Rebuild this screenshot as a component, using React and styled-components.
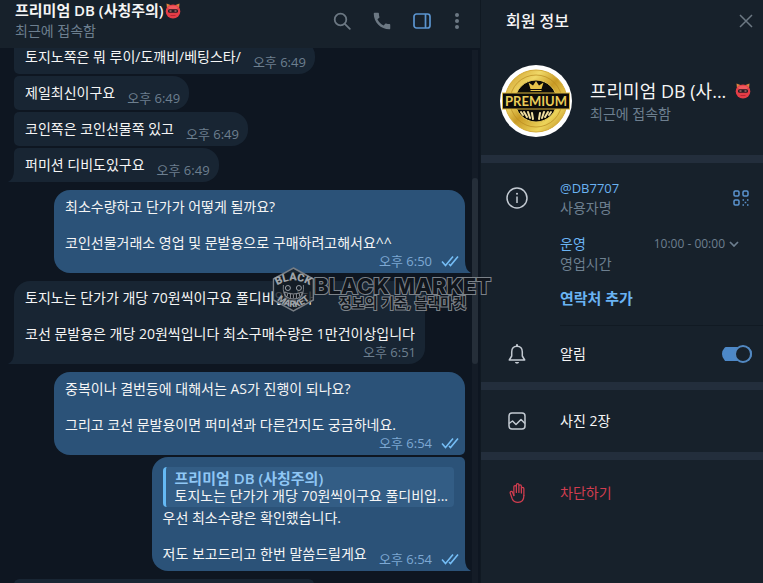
import styled, { createGlobalStyle, css } from 'styled-components';
import { useEffect, useRef, useState } from 'react';
import { MdCall } from 'react-icons/md';
import { IoHandRightOutline } from 'react-icons/io5';

const GlobalStyle = createGlobalStyle`
  *, *::before { box-sizing: border-box; }
  body {
    margin: 0;
    background-color: #0e1621;
    color: #f5f5f5;
    font-family: "Open Sans", "Noto Sans CJK KR", sans-serif;
    font-size: 14px;
    line-height: 18px;
  }
  button {
    border: 0;
    padding: 0;
    background: none;
    color: inherit;
    font: inherit;
    text-align: left;
    cursor: pointer;
  }
  svg { display: block; flex-shrink: 0; }
`;

const Page = styled.div`
  position: relative;
  display: flex;
  height: 100vh;
  overflow: hidden;
`;

const Chat = styled.main`
  flex: 1;
  min-width: 0;
  display: flex;
  flex-direction: column;
`;

const ChatHeader = styled.header`
  height: 48px;
  flex-shrink: 0;
  display: flex;
  justify-content: space-between;
  padding: 0 17px 0 15px;
  background-color: #17212b;
`;

const ChatTitle = styled.h1`
  display: flex;
  align-items: center;
  gap: 1px;
  margin: 0;
  font-size: 15px;
  line-height: 21px;
  font-weight: 600;
  white-space: pre;
`;

const Muted = styled.div`
  color: #6d7f8f;
  line-height: 20px;
`;

const Tools = styled.div`
  display: flex;
  align-items: center;
  height: 42px;
  gap: 20px;
  color: #6c7883;
`;

const ChatBody = styled.div`
  flex: 1;
  min-height: 0;
  display: flex;
  padding-right: 2px;
`;

const List = styled.div`
  flex: 1;
  overflow: hidden;
  display: flex;
  flex-direction: column;
  gap: 8px;
  padding: 0 7px 0 14px;
`;

const Group = styled.div`
  flex-shrink: 0;
  display: flex;
  flex-direction: column;
  align-items: ${p => p.$out ? 'flex-end' : 'flex-start'};
  gap: 2px;
`;

const Track = styled.div`
  width: 6px;
  margin-top: 2px;
  display: flex;
  flex-direction: column;
  background-color: #141c27;
`;

const TrackSpace = styled.div`
  flex: ${p => p.$size};
`;

const Thumb = styled.div`
  flex: 35;
  border-radius: 3px;
  background-color: #252e39;
`;

const outCorners = css`
  border-radius: ${p => p.$first ? '16px 16px' : '16px 5px'} ${p => p.$last ? '0' : '5px'} 16px;
`;

const inCorners = css`
  border-radius: ${p => p.$first ? '16px' : '5px'} 16px 16px ${p => p.$last ? '0' : '5px'};
`;

const Bubble = styled.div`
  position: relative;
  display: flex;
  flex-direction: column;
  width: ${p => p.$wide ? '411px' : 'auto'};
  max-width: ${p => p.$short ? '300px' : '100%'};
  padding: 8px ${p => p.$out ? 6 : 9}px 3px 11px;
  background-color: ${p => p.$out ? '#2b5278' : '#182533'};
  white-space: pre;
  ${p => p.$out ? outCorners : inCorners}
`;

const Tail = styled.svg`
  position: absolute;
  bottom: 0;
  ${p => p.$out ? 'left: 100%' : 'right: 100%'};
  fill: ${p => p.$out ? '#2b5278' : '#182533'};
`;

const Content = styled.div`
  display: flex;
  flex-direction: ${p => p.$wide ? 'column' : 'row'};
  align-items: ${p => p.$wide ? 'stretch' : 'flex-end'};
  justify-content: space-between;
  gap: ${p => p.$wide ? 0 : 12}px;
`;

const Text = styled.div`
  padding-bottom: ${p => p.$wide ? 0 : 5}px;
`;

const Time = styled.div`
  display: flex;
  align-items: center;
  justify-content: flex-end;
  gap: 9px;
  font-size: 13px;
  color: ${p => p.$out ? '#7da8d3' : '#6d7f8f'};
`;

const Reply = styled.blockquote`
  margin: 2px 5px 2px 0;
  padding: 2px 6px 2px 9px;
  height: 40px;
  border-left: 3px solid #65b9f4;
  border-radius: 4px;
  background-color: #335d85;
`;

const ReplyName = styled.div`
  font-size: 15px;
  font-weight: 600;
  color: #8fc7f5;
`;

const Panel = styled.aside`
  width: 283px;
  flex-shrink: 0;
  border-left: 1px solid #101922;
  background-color: #17212b;
`;

const PanelHeader = styled.header`
  display: flex;
  align-items: center;
  justify-content: space-between;
  height: 42px;
  padding: 0 10px 0 25px;
`;

const PanelTitle = styled.h2`
  margin: 0;
  font-size: 16px;
  font-weight: 500;
`;

const CloseButton = styled.button`
  color: #6c7883;
`;

const Profile = styled.section`
  display: flex;
  align-items: center;
  gap: 18px;
  height: 113px;
  padding: 4px 12px 0 19px;
`;

const ProfileText = styled.div`
  flex: 1;
  min-width: 0;
`;

const ProfileName = styled.div`
  display: flex;
  align-items: center;
  justify-content: space-between;
  font-size: 18px;
  line-height: 26px;
  white-space: nowrap;
`;

const Section = styled.section`
  border-top: 8px solid #232e3c;
`;

const Row = styled.div`
  display: grid;
  grid-template-columns: 22px 1fr auto;
  column-gap: 32px;
  align-items: center;
  min-height: ${p => p.$height}px;
  padding: 0 11px 0 25px;
  line-height: 20px;
  color: ${p => p.$danger ? '#d13d4f' : 'inherit'};
`;

const RowButton = styled(Row)`
  width: 100%;
`;

const IconCell = styled.span`
  display: flex;
  justify-content: center;
  color: ${p => p.$danger ? '#d13d4f' : '#c3cad2'};
`;

const QrButton = styled.button`
  padding: 0 3px;
`;

const Indented = styled.div`
  margin-left: 79px;
  padding-top: 1px;
`;

const Hours = styled.div`
  display: flex;
  justify-content: space-between;
  padding-right: 24px;
`;

const HoursButton = styled.button`
  display: flex;
  align-items: center;
  gap: 4px;
  font-size: 12px;
  line-height: 20px;
  color: #6d7f8f;
`;

const Username = styled.a`
  display: block;
  font-size: 13px;
  color: #6ab3f3;
  text-decoration: none;
`;

const Blue = styled.div`
  line-height: 20px;
  color: #6ab3f3;
`;

const AddContact = styled.button`
  display: block;
  margin: 14px 0 17px;
  font-size: 15px;
  line-height: 20px;
  font-weight: 600;
  color: #6ab3f3;
`;

const Divider = styled.hr`
  margin: 0;
  border: 0;
  border-top: 1px solid #111a23;
`;

const Switch = styled.input`
  appearance: none;
  display: flex;
  justify-content: ${p => p.checked ? 'flex-end' : 'flex-start'};
  width: 30px;
  height: 18px;
  margin: 0;
  cursor: pointer;
  background: linear-gradient(#4d88c7, #4d88c7) center / 30px 14px no-repeat;
  border-radius: 9px;

  &::before {
    content: "";
    width: 18px;
    height: 18px;
    border: 2px solid #5288c1;
    border-radius: 50%;
    background-color: #17212b;
  }
`;

const Watermark = styled.div`
  position: absolute;
  top: 50%;
  left: 50%;
  transform: translate(-50%, -50%);
  display: flex;
  align-items: flex-start;
  height: 50px;
  pointer-events: none;
  color: #10151c;
  white-space: nowrap;
`;

const WatermarkText = styled.div`
  padding-top: 9px;
`;

const Brand = styled.div`
  font-family: Inter, sans-serif;
  font-size: 22px;
  line-height: 20px;
  font-weight: 800;
  -webkit-text-stroke: 2px #7c8289;
  paint-order: stroke fill;
`;

const Slogan = styled.div`
  font-size: 14px;
  font-weight: 700;
  line-height: 14px;
  text-align: center;
  -webkit-text-stroke: 2px #7c8289;
  paint-order: stroke fill;
`;

function Oni() {
    return (
        <svg width="16" height="16" viewBox="0 0 16 16" aria-hidden="true">
            <path d="M1.500 .5l4 1.500-3.500 4zM14.500 .5l-4 1.500 3.500 4z" fill="#d9823f"/>
            <ellipse cx="8" cy="8.500" rx="7.300" ry="7" fill="#e43d46"/>
            <path d="M3 4q5-2.500 10 0l-1 2H4z" fill="#f05a5e"/>
            <rect x="3" y="6.300" width="10" height="3.400" rx="1.500" fill="#291d25"/>
            <path d="M4.500 8h2M9.500 8h2" stroke="#df8d86"/>
            <path d="M5.500 12.500h5" stroke="#b92534"/>
        </svg>
    )
}

function Checks() {
    return (
        <svg width="18" height="12" viewBox="0 0 18 12" fill="none" stroke="#75bdf5" strokeWidth="1.6">
            <path d="M1 6.500l3.500 4L12 1.500M8 9l1.500 1.500L17 1.500"/>
        </svg>
    )
}

function PremiumBadge() {
    return (
        <svg width="72" height="72" viewBox="0 0 72 72" role="img" aria-label="PREMIUM">
            <defs>
                <linearGradient id="gold" x1="0" y1="0" x2="1" y2="1">
                    <stop offset="0" stopColor="#c8931f"/>
                    <stop offset=".3" stopColor="#f0d868"/>
                    <stop offset=".5" stopColor="#c99a25"/>
                    <stop offset=".75" stopColor="#ecd45a"/>
                    <stop offset="1" stopColor="#b57d16"/>
                </linearGradient>
            </defs>
            <circle cx="36" cy="36" r="36" fill="#fff"/>
            <circle cx="36" cy="36" r="31" fill="url(#gold)" stroke="#d4ab38" strokeWidth="1"/>
            <circle cx="36" cy="36" r="26" fill="none" stroke="#b88a1f" strokeWidth=".7"/>
            <circle cx="36" cy="36" r="21" fill="#0c0b09" stroke="#e8cb58"/>
            <path d="M30.500 24l-2-6.500 4.500 3 3-4.500 3 4.500 4.500-3-2 6.500z" fill="#e6c34b"/>
            <path d="M30.500 25.500h11" stroke="#e6c34b"/>
            <rect x="2.500" y="28" width="67" height="16" fill="#0c0b09" stroke="#d9b53f"/>
            <text x="36" y="41" textAnchor="middle" fontFamily="Lato, sans-serif" fontWeight="700" fontSize="13" fill="#e9cb58">PREMIUM</text>
            <path d="M21 47l2 3M24 47l3 5M28 47l2 6M32 48l1 6M40 48l-1 6M44 47l-2 6M48 47l-3 5M51 47l-2 3" stroke="#f1dfa0" strokeWidth="2" strokeLinecap="round"/>
        </svg>
    )
}

function MarketLogo() {
    return (
        <svg width="42" height="45" viewBox="0 0 42 45" aria-hidden="true">
            <defs>
                <path id="arcTop" d="M3.500 19Q21 8 38.500 19"/>
                <path id="arcBottom" d="M5 33Q21 47 37 33"/>
            </defs>
            <path d="M21 1l20 11v21L21 44 1 33V12z" fill="#141b23" fillOpacity=".8" stroke="#787e85" strokeWidth="1.500"/>
            <path d="M11 18q-1 9 4 14M31 18q1 9-4 14" fill="none" stroke="#777d84"/>
            <path d="M12 25q9 4 18 0-1 7-9 7t-9-7z" fill="#0d1218" stroke="#8c9197"/>
            <path d="M15 26.500v3M18 27v4M21 27.500v4M24 27v4M27 26.500v3" stroke="#8c9197"/>
            <circle cx="15.500" cy="21" r="2.500" fill="none" stroke="#9a9fa5"/>
            <circle cx="26.500" cy="21" r="2.500" fill="none" stroke="#9a9fa5"/>
            <g fontFamily="Roboto, sans-serif" fontWeight="900" fill="#9ea3a8">
                <text fontSize="11" textAnchor="middle"><textPath href="#arcTop" startOffset="50%">BLACK</textPath></text>
                <text fontSize="9" textAnchor="middle"><textPath href="#arcBottom" startOffset="50%">MARKET</textPath></text>
            </g>
        </svg>
    )
}

function SearchIcon() {
    return (
        <svg width="18" height="18" viewBox="0 0 18 18" fill="none" stroke="currentColor" strokeWidth="1.800">
            <circle cx="7.500" cy="7.500" r="5.800"/>
            <path d="M11.800 11.800l5 5" strokeLinecap="round"/>
        </svg>
    )
}

function SidebarIcon() {
    return (
        <svg width="18" height="16" viewBox="0 0 18 16" fill="none" stroke="#5b94cf" strokeWidth="1.700">
            <rect x="1" y="1" width="16" height="14" rx="2.500"/>
            <path d="M12.500 1v14"/>
        </svg>
    )
}

function MenuIcon() {
    return (
        <svg width="12" height="18" viewBox="0 0 12 18" fill="currentColor">
            <circle cx="6" cy="3" r="2"/>
            <circle cx="6" cy="9" r="2"/>
            <circle cx="6" cy="15" r="2"/>
        </svg>
    )
}

function CloseIcon() {
    return (
        <svg width="14" height="14" viewBox="0 0 14 14" stroke="currentColor" strokeWidth="1.500">
            <path d="M1 1l12 12M13 1L1 13"/>
        </svg>
    )
}

function InfoIcon() {
    return (
        <svg width="22" height="22" viewBox="0 0 22 22" fill="none" stroke="currentColor" strokeWidth="1.500">
            <circle cx="11" cy="11" r="10"/>
            <path d="M11 9.500V16"/>
            <circle cx="11" cy="6.700" r="1" fill="currentColor" stroke="none"/>
        </svg>
    )
}

function QrIcon() {
    return (
        <svg width="16" height="16" viewBox="0 0 16 16" fill="none" stroke="#5b94cf" strokeWidth="1.500">
            <rect x="1" y="1" width="5" height="5" rx="1.200"/>
            <rect x="10" y="1" width="5" height="5" rx="1.200"/>
            <rect x="1" y="10" width="5" height="5" rx="1.200"/>
            <path d="M9.500 10H11M14 10h1.500M11.700 12.500h1.600M9.500 15H11M14 15h1.500"/>
        </svg>
    )
}

function BellIcon() {
    return (
        <svg width="18" height="20" viewBox="0 0 18 20" fill="none" stroke="currentColor" strokeWidth="1.500" strokeLinejoin="round">
            <path d="M9 2.200C5.500 2.200 3.700 4.800 3.700 8v4L1.300 16h15.400l-2.400-4V8c0-3.200-1.800-5.800-5.300-5.800z"/>
            <path d="M9 .3v2" strokeWidth="2"/>
            <path d="M6.800 18a2.300 2.300 0 0 0 4.400 0z" fill="currentColor" stroke="none"/>
        </svg>
    )
}

function PhotoIcon() {
    return (
        <svg width="18" height="18" viewBox="0 0 18 18" fill="none" stroke="currentColor" strokeWidth="1.500" strokeLinejoin="round">
            <rect x="1" y="1" width="16" height="16" rx="3"/>
            <path d="M1 11.500l3.500-2.500 3.500 3.500 5-5 4 4"/>
        </svg>
    )
}

function ChevronIcon() {
    return (
        <svg width="10" height="6" viewBox="0 0 10 6" fill="none" stroke="currentColor" strokeWidth="1.700">
            <path d="M1 1l4 4 4-4"/>
        </svg>
    )
}

const groups = [
    {
        messages: [
            { text: '토지노쪽은 뭐 루이/도깨비/베팅스타/', time: '오후 6:49', follows: true },
            { text: '제일최신이구요', time: '오후 6:49' },
            { text: '코인쪽은 코인선물쪽 있고', time: '오후 6:49' },
            { text: '퍼미션 디비도있구요', time: '오후 6:49' },
        ]
    },
    {
        out: true,
        messages: [
            { text: '최소수량하고 단가가 어떻게 될까요?\n\n코인선물거래소 영업 및 문발용으로 구매하려고해서요^^', time: '오후 6:50', wide: true },
        ]
    },
    {
        messages: [
            { text: '토지노는 단가가 개당 70원씩이구요 풀디비입니다\n\n코선 문발용은 개당 20원씩입니다 최소구매수량은 1만건이상입니다', time: '오후 6:51', wide: true },
        ]
    },
    {
        out: true,
        messages: [
            { text: '중복이나 결번등에 대해서는 AS가 진행이 되나요?\n\n그리고 코선 문발용이면 퍼미션과 다른건지도 궁금하네요.', time: '오후 6:54', wide: true },
            {
                reply: { name: '프리미엄 DB (사칭주의)', text: '토지노는 단가가 개당 70원씩이구요 풀디비입...' },
                text: '우선 최소수량은 확인했습니다.\n\n저도 보고드리고 한번 말씀드릴게요',
                time: '오후 6:54'
            },
        ]
    },
]

function Message({ message, out, first, last }) {
    const { text, time, wide, reply } = message;

    return (
        <Bubble $out={out} $first={first} $last={last} $wide={wide}>
            {reply && (
                <Reply>
                    <ReplyName>{reply.name}</ReplyName>
                    <div>{reply.text}</div>
                </Reply>
            )}
            <Content $wide={wide}>
                <Text $wide={wide}>{text}</Text>
                <Time $out={out}>{time}{out && <Checks/>}</Time>
            </Content>
            {last && (
                <Tail $out={out} width="6" height="12" viewBox="0 0 6 12">
                    <path d={out ? 'M0 0q0 9 6 12H0z' : 'M6 0q0 9-6 12h6z'}/>
                </Tail>
            )}
        </Bubble>
    )
}

function App() {
    const listRef = useRef(null);
    const [notify, setNotify] = useState(true);

    //the history opens slightly below its first loaded message
    useEffect(() => {
        listRef.current.scrollTop = 8;
    }, [])

    return (
        <>
            <GlobalStyle/>
            <Page>
                <Chat>
                    <ChatHeader>
                        <div>
                            <ChatTitle>프리미엄 DB (사칭주의)<Oni/></ChatTitle>
                            <Muted>최근에 접속함</Muted>
                        </div>
                        <Tools>
                            <button aria-label="검색"><SearchIcon/></button>
                            <button aria-label="통화"><MdCall size={22}/></button>
                            <button aria-label="회원 정보"><SidebarIcon/></button>
                            <button aria-label="메뉴"><MenuIcon/></button>
                        </Tools>
                    </ChatHeader>
                    <ChatBody>
                        <List ref={listRef}>
                            {groups.map((group, g) => (
                                <Group key={g} $out={group.out}>
                                    {group.messages.map((message, i) => (
                                        <Message
                                            key={i}
                                            message={message}
                                            out={group.out}
                                            first={i === 0 && !message.follows}
                                            last={i === group.messages.length - 1}
                                        />
                                    ))}
                                </Group>
                            ))}
                            <Group>
                                <Bubble $first $last $wide $short/>
                            </Group>
                        </List>
                        <Track>
                            <TrackSpace $size={24}/>
                            <Thumb/>
                            <TrackSpace $size={41}/>
                        </Track>
                    </ChatBody>
                </Chat>

                <Panel>
                    <PanelHeader>
                        <PanelTitle>회원 정보</PanelTitle>
                        <CloseButton aria-label="닫기"><CloseIcon/></CloseButton>
                    </PanelHeader>
                    <Profile>
                        <PremiumBadge/>
                        <ProfileText>
                            <ProfileName>프리미엄 DB (사... <Oni/></ProfileName>
                            <Muted>최근에 접속함</Muted>
                        </ProfileText>
                    </Profile>
                    <Section>
                        <Row $height={70}>
                            <IconCell><InfoIcon/></IconCell>
                            <div>
                                <Username href="#DB7707">@DB7707</Username>
                                <Muted>사용자명</Muted>
                            </div>
                            <QrButton aria-label="QR 코드"><QrIcon/></QrButton>
                        </Row>
                        <Indented>
                            <Hours>
                                <div>
                                    <Blue>운영</Blue>
                                    <Muted>영업시간</Muted>
                                </div>
                                <div>
                                    <HoursButton>10:00 - 00:00 <ChevronIcon/></HoursButton>
                                </div>
                            </Hours>
                            <AddContact>연락처 추가</AddContact>
                            <Divider/>
                        </Indented>
                        <Row as="label" $height={56}>
                            <IconCell><BellIcon/></IconCell>
                            <span>알림</span>
                            <Switch type="checkbox" checked={notify} onChange={e => setNotify(e.target.checked)}/>
                        </Row>
                    </Section>
                    <Section>
                        <RowButton as="button" $height={62}>
                            <IconCell><PhotoIcon/></IconCell>
                            <span>사진 2장</span>
                        </RowButton>
                    </Section>
                    <Section>
                        <RowButton as="button" $height={66} $danger>
                            <IconCell $danger><IoHandRightOutline size={20}/></IconCell>
                            <span>차단하기</span>
                        </RowButton>
                    </Section>
                </Panel>

                <Watermark>
                    <MarketLogo/>
                    <WatermarkText>
                        <Brand>BLACK MARKET</Brand>
                        <Slogan>정보의 기준, 블랙마켓</Slogan>
                    </WatermarkText>
                </Watermark>
            </Page>
        </>
    )
}

export default App;
